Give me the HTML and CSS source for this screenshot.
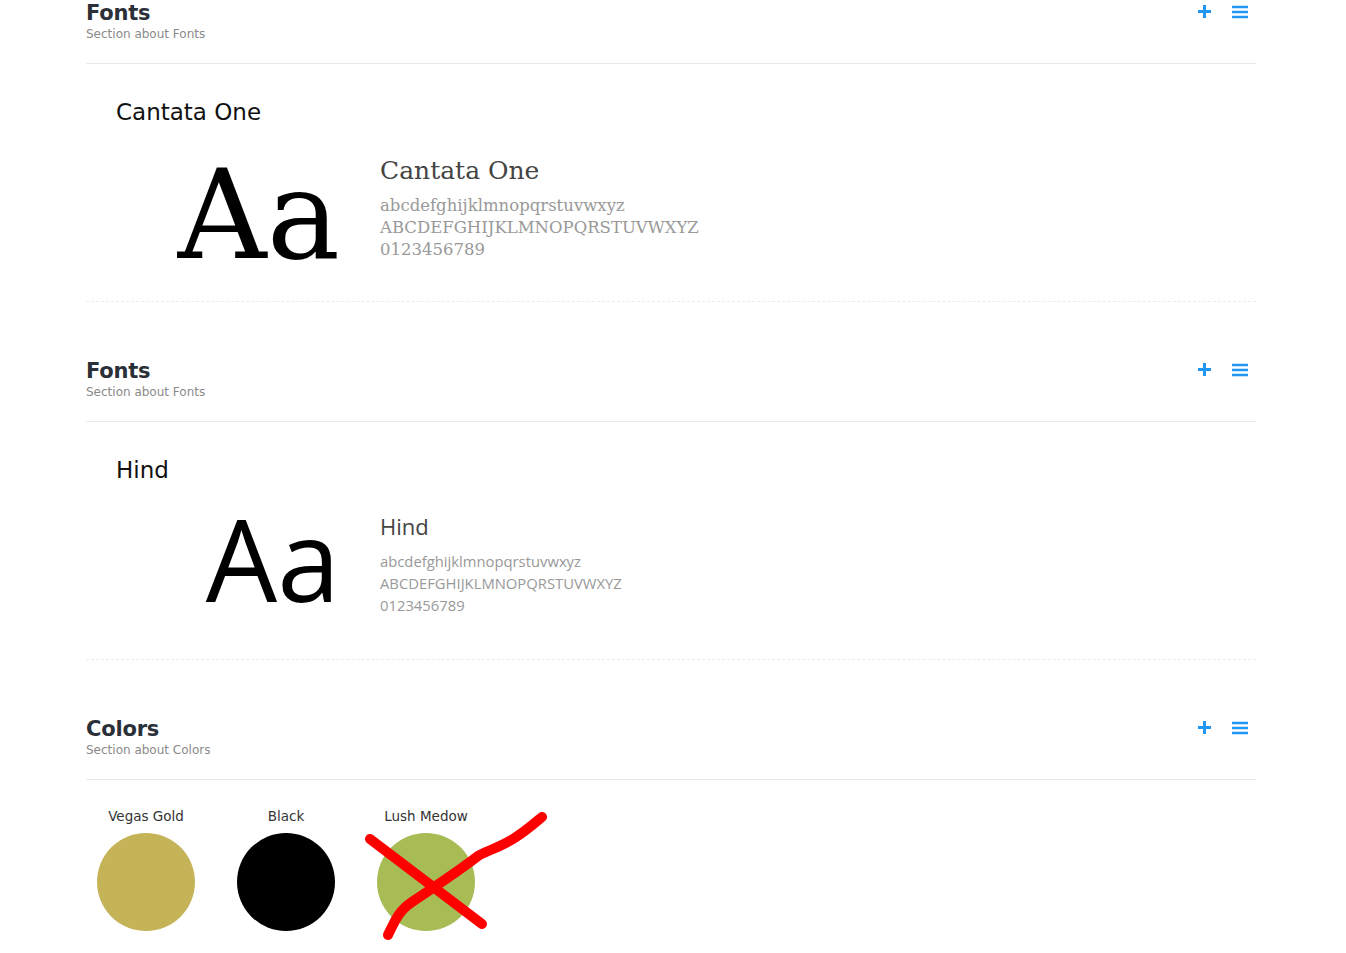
FILE: index.html
```html
<!DOCTYPE html>
<html>
<head>
<meta charset="utf-8">
<link rel="stylesheet" href="styles.css">
</head>
<body>
<div class="page">

  <section class="section">
    <div class="sec-head">
      <div class="sec-titles">
        <div class="sec-title">Fonts</div>
        <div class="sec-sub">Section about Fonts</div>
      </div>
      <div class="sec-actions">
        <svg class="ico-plus" width="15" height="15" viewBox="0 0 15 15"><path d="M7.5 1v13M1 7.5h13" stroke="#2196f3" stroke-width="3" fill="none"/></svg>
        <svg class="ico-menu" width="16" height="14" viewBox="0 0 16 14"><path d="M0 2h16M0 7h16M0 12h16" stroke="#2196f3" stroke-width="2.4" fill="none"/></svg>
      </div>
    </div>
    <div class="font-block">
      <div class="font-name">Cantata One</div>
      <div class="specimen">
        <div class="aa aa-serif">Aa</div>
        <div class="spec-text spec-serif">
          <div class="spec-title">Cantata One</div>
          <div class="spec-line">abcdefghijklmnopqrstuvwxyz</div>
          <div class="spec-line">ABCDEFGHIJKLMNOPQRSTUVWXYZ</div>
          <div class="spec-line">0123456789</div>
        </div>
      </div>
    </div>
  </section>

  <section class="section">
    <div class="sec-head">
      <div class="sec-titles">
        <div class="sec-title">Fonts</div>
        <div class="sec-sub">Section about Fonts</div>
      </div>
      <div class="sec-actions">
        <svg class="ico-plus" width="15" height="15" viewBox="0 0 15 15"><path d="M7.5 1v13M1 7.5h13" stroke="#2196f3" stroke-width="3" fill="none"/></svg>
        <svg class="ico-menu" width="16" height="14" viewBox="0 0 16 14"><path d="M0 2h16M0 7h16M0 12h16" stroke="#2196f3" stroke-width="2.4" fill="none"/></svg>
      </div>
    </div>
    <div class="font-block">
      <div class="font-name">Hind</div>
      <div class="specimen">
        <div class="aa aa-sans">Aa</div>
        <div class="spec-text spec-sans">
          <div class="spec-title">Hind</div>
          <div class="spec-line">abcdefghijklmnopqrstuvwxyz</div>
          <div class="spec-line">ABCDEFGHIJKLMNOPQRSTUVWXYZ</div>
          <div class="spec-line">0123456789</div>
        </div>
      </div>
    </div>
  </section>

  <section class="section">
    <div class="sec-head">
      <div class="sec-titles">
        <div class="sec-title">Colors</div>
        <div class="sec-sub">Section about Colors</div>
      </div>
      <div class="sec-actions">
        <svg class="ico-plus" width="15" height="15" viewBox="0 0 15 15"><path d="M7.5 1v13M1 7.5h13" stroke="#2196f3" stroke-width="3" fill="none"/></svg>
        <svg class="ico-menu" width="16" height="14" viewBox="0 0 16 14"><path d="M0 2h16M0 7h16M0 12h16" stroke="#2196f3" stroke-width="2.4" fill="none"/></svg>
      </div>
    </div>
    <div class="swatches">
      <div class="swatch">
        <div class="swatch-label">Vegas Gold</div>
        <div class="swatch-dot dot-gold"></div>
      </div>
      <div class="swatch">
        <div class="swatch-label">Black</div>
        <div class="swatch-dot dot-black"></div>
      </div>
      <div class="swatch">
        <div class="swatch-label">Lush Medow</div>
        <div class="swatch-dot dot-green"></div>
      </div>
      <svg class="scribble" width="200" height="140" viewBox="0 0 200 140">
        <path d="M10 33 L122 118" stroke="#ff0000" stroke-width="10" stroke-linecap="round" fill="none"/>
        <path d="M28 129 C36 112 40 104 52 96 C70 84 100 64 118 50 C124 46 138 42 153 33 C166 25 176 16 182 11" stroke="#ff0000" stroke-width="10" stroke-linecap="round" stroke-linejoin="round" fill="none"/>
      </svg>
    </div>
  </section>

</div>
</body>
</html>
```

FILE: styles.css
```css
html, body {
  margin: 0;
  padding: 0;
  background: #ffffff;
}

.page {
  width: 1170px;
  margin-left: 86px;
  padding-bottom: 22px;
  font-family: "DejaVu Sans", sans-serif;
}

.section + .section {
  margin-top: 56px;
}

.sec-head {
  display: flex;
  justify-content: space-between;
  align-items: flex-start;
  padding-top: 1px;
  padding-bottom: 21px;
  border-bottom: 1px solid #e9e9e9;
}

.sec-title {
  font-size: 21px;
  line-height: 25px;
  font-weight: bold;
  color: #2b2f38;
  letter-spacing: -0.2px;
}

.sec-sub {
  font-size: 12px;
  line-height: 16px;
  color: #8a8a8a;
}

.sec-actions {
  display: flex;
  align-items: center;
  gap: 20px;
  margin-top: 3px;
  margin-right: 8px;
}

.ico-plus, .ico-menu {
  display: block;
}

.font-block {
  padding-left: 30px;
  border-bottom: 1px dashed #ececec;
}

.font-name {
  margin-top: 33px;
  font-size: 23px;
  line-height: 30px;
  color: #111;
}

.specimen {
  display: flex;
  align-items: flex-start;
  height: 174px;
}

.aa {
  width: 224px;
  text-align: right;
  line-height: 1;
  color: #000;
  flex-shrink: 0;
}

.aa-serif {
  font-family: "DejaVu Serif", serif;
  font-size: 123px;
  margin-top: 27px;
}

.aa-sans {
  font-family: "Open Sans", sans-serif;
  font-size: 113px;
  margin-top: 17px;
}

.spec-text {
  margin-left: 40px;
}

.spec-serif {
  font-family: "DejaVu Serif", serif;
  margin-top: 29px;
}

.spec-sans {
  font-family: "Open Sans", sans-serif;
  margin-top: 26px;
}

.spec-title {
  color: #444;
  line-height: 30px;
  margin-bottom: 9px;
}

.spec-serif .spec-title {
  font-size: 25px;
}

.spec-sans .spec-title {
  font-size: 22px;
  margin-bottom: 9px;
}

.spec-line {
  color: #999;
  line-height: 22px;
}

.spec-serif .spec-line {
  font-size: 16.5px;
}

.spec-sans .spec-line {
  font-size: 14.8px;
}

.swatches {
  position: relative;
  display: flex;
  gap: 20px;
  padding-top: 27px;
}

.swatch {
  width: 120px;
  display: flex;
  flex-direction: column;
  align-items: center;
}

.swatch-label {
  font-size: 13.5px;
  line-height: 18px;
  color: #333;
  margin-bottom: 8px;
}

.swatch-dot {
  width: 98px;
  height: 98px;
  border-radius: 50%;
}

.dot-gold { background: #c5b358; }
.dot-black { background: #000000; }
.dot-green { background: #a8bc56; }

.scribble {
  position: absolute;
  left: 274px;
  top: 26px;
}
```
